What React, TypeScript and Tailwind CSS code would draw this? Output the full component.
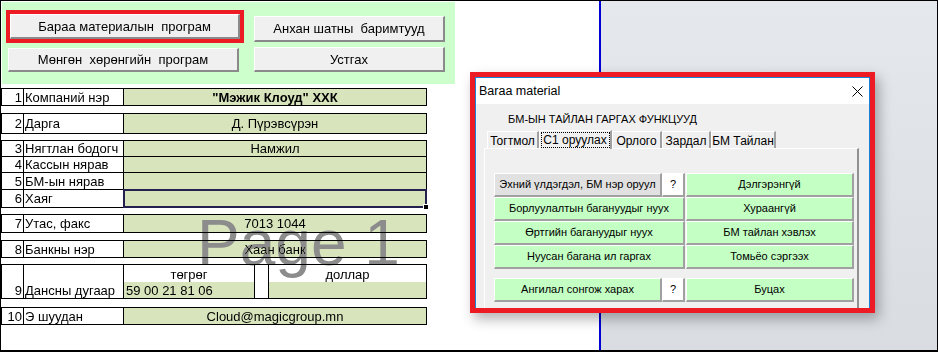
import clsx from 'clsx';

const SheetBtn = ({ children, className }: { children: React.ReactNode; className?: string }) => (
  <div
    className={clsx(
      'flex items-center justify-center whitespace-pre bg-[#f0f0f0] text-[13px] border-t border-l border-b-2 border-r-2 border-t-white border-l-white border-b-[#8a8a8a] border-r-[#8a8a8a]',
      className
    )}
  >
    {children}
  </div>
);

const DlgBtn = ({ children, className }: { children: React.ReactNode; className?: string }) => (
  <div
    className={clsx(
      'flex items-center justify-center h-[24px] text-[11px] whitespace-nowrap border-t border-l border-b-2 border-r-2 border-t-white border-l-white border-b-[#a0a0a0] border-r-[#a0a0a0]',
      className
    )}
  >
    {children}
  </div>
);

type RowProps = {
  n?: string;
  label?: string;
  value?: React.ReactNode;
  h: string;
  bold?: boolean;
  selected?: boolean;
};

const Row = ({ n, label, value, h, bold, selected }: RowProps) => (
  <div className={clsx('flex border-b border-black', h)}>
    <div className="w-[22px] border-r border-black flex items-center justify-end pr-[1px]">{n}</div>
    <div className="w-[100px] border-r border-black flex items-center pl-[1px] whitespace-nowrap">{label}</div>
    <div
      className={clsx(
        'relative w-[303px] border-r border-black bg-[#d8e4bc] flex items-center justify-center',
        bold && 'font-bold'
      )}
    >
      {value}
      {selected && (
        <>
          <div className="absolute -inset-[1px] border-2 border-[#24214f]" />
          <div className="absolute -right-[3px] -bottom-[3px] w-[6px] h-[6px] bg-black border border-white" />
        </>
      )}
    </div>
  </div>
);

const Group = ({ children, className }: { children: React.ReactNode; className?: string }) => (
  <div className={clsx('w-[426px] border-t border-l border-black', className)}>{children}</div>
);

const tabs = [
  { t: 'Тогтмол', w: 'w-[52px]' },
  { t: 'С1 оруулах', w: 'w-[73px]', active: true },
  { t: 'Орлого', w: 'w-[50px]' },
  { t: 'Зардал', w: 'w-[49px]' },
  { t: 'БМ Тайлан', w: 'w-[65px]' },
];

export default function App() {
  return (
    <div className="relative w-[938px] h-[352px] overflow-hidden flex border-t border-l border-r border-b-2 border-black text-black font-['Liberation_Sans',Arial,sans-serif]">
      {/* sheet */}
      <div className="relative w-[598px] bg-white flex flex-col text-[13px] leading-none">
        <div className="ml-[1px] mt-[1px] w-[453px] h-[82px] bg-[#ccffcc] flex">
          <div className="flex flex-col pl-[4px] pt-[8px]">
            <div className="w-[238px] h-[33px] border-4 border-[#ed1c24]">
              <SheetBtn className="w-full h-full">Бараа материалын  програм</SheetBtn>
            </div>
            <SheetBtn className="mt-[5px] ml-[2px] w-[231px] h-[24px]">Мөнгөн  хөрөнгийн  програм</SheetBtn>
          </div>
          <div className="flex flex-col ml-[10px] pt-[14px] gap-[5px]">
            <SheetBtn className="w-[191px] h-[26px]">Анхан шатны  баримтууд</SheetBtn>
            <SheetBtn className="w-[191px] h-[25px]">Устгах</SheetBtn>
          </div>
        </div>

        <Group className="mt-[4px]">
          <Row n="1" label="Компаний нэр" value={'"Мэжик Клоуд" ХХК'} bold h="h-[17px]" />
        </Group>
        <Group className="mt-[7px]">
          <Row n="2" label="Дарга" value="Д. Пүрэвсүрэн" h="h-[20px]" />
        </Group>
        <Group className="mt-[6px]">
          <Row n="3" label="Нягтлан бодогч" value="Намжил" h="h-[16px]" />
          <Row n="4" label="Кассын нярав" h="h-[16px]" />
          <Row n="5" label="БМ-ын нярав" h="h-[17px]" />
          <Row n="6" label="Хаяг" h="h-[18px]" selected />
        </Group>
        <Group className="mt-[6px]">
          <Row n="7" label="Утас, факс" value="7013 1044" h="h-[18px]" />
        </Group>
        <Group className="mt-[7px]">
          <Row n="8" label="Банкны нэр" value="Хаан банк" h="h-[17px]" />
        </Group>
        <Group className="mt-[6px]">
          <div className="flex h-[17px]">
            <div className="w-[22px] border-r border-black" />
            <div className="w-[100px] border-r border-black" />
            <div className="w-[131px] border-r border-black flex items-end justify-center pb-[1px]">төгрөг</div>
            <div className="w-[14px] border-r border-black" />
            <div className="w-[158px] border-r border-black flex items-end justify-center pb-[1px]">доллар</div>
          </div>
          <div className="flex h-[17px] border-b border-black">
            <div className="w-[22px] border-r border-black flex items-center justify-end pr-[1px]">9</div>
            <div className="w-[100px] border-r border-black flex items-center pl-[1px] whitespace-nowrap">Дансны дугаар</div>
            <div className="w-[131px] border-r border-black bg-[#d8e4bc] flex items-center pl-[2px]">59 00 21 81 06</div>
            <div className="w-[14px] border-r border-black" />
            <div className="w-[158px] border-r border-black bg-[#d8e4bc]" />
          </div>
        </Group>
        <Group className="mt-[8px]">
          <Row n="10" label="Э шуудан" value="Cloud@magicgroup.mn" h="h-[17px]" />
        </Group>

        <div className="absolute left-[196px] top-[210px] text-[64px] leading-none text-[#8c8c8c] mix-blend-darken pointer-events-none whitespace-nowrap">
          Page 1
        </div>
      </div>

      {/* page break line */}
      <div className="w-[2px] bg-[#0000d4]" />

      {/* outside print area */}
      <div className="flex-1 bg-gradient-to-b from-[#e5e8ec] to-[#d9dde2]" />

      {/* dialog */}
      <div className="absolute left-[469px] top-[71px] w-[405px] h-[241px] border-[5px] border-[#ed1c24] shadow-[4px_6px_12px_rgba(0,0,0,0.3)]">
        <div className="h-full flex flex-col border border-b-0 border-[#1883d7] bg-[#f0f0f0]">
          <div className="h-[26px] bg-white flex items-center justify-between pl-[3px] pr-[6px] text-[12.5px]">
            <span>Baraa material</span>
            <svg width="11" height="11" viewBox="0 0 11 11">
              <path d="M0.5 0.5 L10.5 10.5 M10.5 0.5 L0.5 10.5" stroke="#000" strokeWidth="1" fill="none" />
            </svg>
          </div>
          <div className="flex-1 flex flex-col text-[11px] leading-none whitespace-nowrap">
            <div className="pl-[32px] pt-[10px] h-[23px]">БМ-ЫН ТАЙЛАН ГАРГАХ ФУНКЦУУД</div>
            <div className="flex items-end ml-[11px] mt-[2px] h-[19px] relative z-10">
              {tabs.map(tab =>
                tab.active ? (
                  <div
                    key={tab.t}
                    className={clsx(
                      tab.w,
                      'h-[19px] -mb-[1px] bg-[#f0f0f0] border-t border-l border-r-2 border-t-white border-l-white border-r-[#a0a0a0] flex items-start justify-center pt-[1px]'
                    )}
                  >
                    <span className="border border-dotted border-black h-[16px] flex items-center w-[69px] justify-center text-[12px]">
                      {tab.t}
                    </span>
                  </div>
                ) : (
                  <div
                    key={tab.t}
                    className={clsx(
                      tab.w,
                      'h-[17px] bg-[#f0f0f0] border-t border-l border-r-2 border-t-white border-l-white border-r-[#a0a0a0] flex items-center justify-center pt-[1px] text-[12px]'
                    )}
                  >
                    {tab.t}
                  </div>
                )
              )}
            </div>
            <div className="flex-1 ml-[8px] w-[375px] border-t border-l border-r-2 border-t-white border-l-white border-r-[#909090] pl-[9px] pt-[24px]">
              <div className="flex">
                <DlgBtn className="w-[168px] bg-[#e1e1e1]">Эхний үлдэгдэл, БМ нэр оруул</DlgBtn>
                <DlgBtn className="w-[23px] bg-white">?</DlgBtn>
                <DlgBtn className="w-[168px] ml-[1px] bg-[#c4ffc4]">Дэлгэрэнгүй</DlgBtn>
              </div>
              <div className="flex">
                <DlgBtn className="w-[191px] bg-[#c4ffc4]">Борлуулалтын багануудыг нуух</DlgBtn>
                <DlgBtn className="w-[168px] ml-[1px] bg-[#c4ffc4]">Хураангүй</DlgBtn>
              </div>
              <div className="flex">
                <DlgBtn className="w-[191px] bg-[#c4ffc4]">Өртгийн багануудыг нуух</DlgBtn>
                <DlgBtn className="w-[168px] ml-[1px] bg-[#c4ffc4]">БМ тайлан хэвлэх</DlgBtn>
              </div>
              <div className="flex">
                <DlgBtn className="w-[191px] bg-[#c4ffc4]">Нуусан багана ил гаргах</DlgBtn>
                <DlgBtn className="w-[168px] ml-[1px] bg-[#c4ffc4]">Томьёо сэргээх</DlgBtn>
              </div>
              <div className="flex mt-[9px]">
                <DlgBtn className="w-[168px] bg-[#c4ffc4]">Ангилал сонгож харах</DlgBtn>
                <DlgBtn className="w-[23px] bg-white">?</DlgBtn>
                <DlgBtn className="w-[168px] ml-[1px] bg-[#c4ffc4]">Буцах</DlgBtn>
              </div>
            </div>
          </div>
        </div>
      </div>
    </div>
  );
}
